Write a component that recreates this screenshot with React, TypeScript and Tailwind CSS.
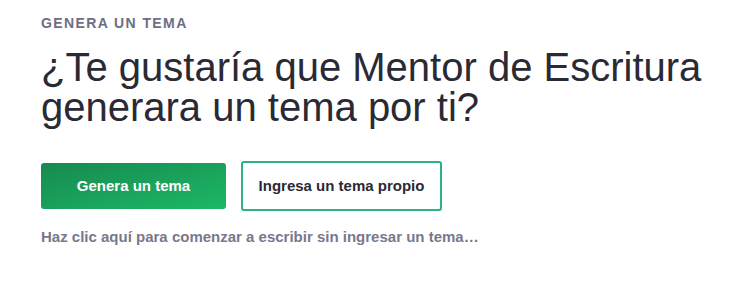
export default function App() {
  return (
    <div
      className="w-[740px] h-[291px] bg-white pl-[41px] pt-[13px]"
      style={{ fontFamily: '"Liberation Sans", Arial, sans-serif' }}
    >
      <div className="text-[14px] leading-[20px] font-bold tracking-[0.1em] text-[#6e6e82]">
        GENERA UN TEMA
      </div>
      <h1 className="mt-[14px] text-[40px] leading-[40px] text-[#2a2a35] font-normal">
        ¿Te gustaría que Mentor de Escritura
        <br />
        generara un tema por ti?
      </h1>
      <div className="mt-[34px] flex items-center gap-[15px]">
        <button className="w-[185px] h-[46px] rounded-[3px] bg-gradient-to-br from-[#178a50] to-[#1cb866] text-white text-[15px] font-bold">
          Genera un tema
        </button>
        <button className="w-[201px] h-[50px] rounded-[3px] border-2 border-[#2bb383] bg-white text-[#2a2a35] text-[15px] font-bold">
          Ingresa un tema propio
        </button>
      </div>
      <div className="mt-[16px] text-[15px] leading-[20px] font-bold text-[#78788c]">
        Haz clic aquí para comenzar a escribir sin ingresar un tema…
      </div>
    </div>
  );
}
